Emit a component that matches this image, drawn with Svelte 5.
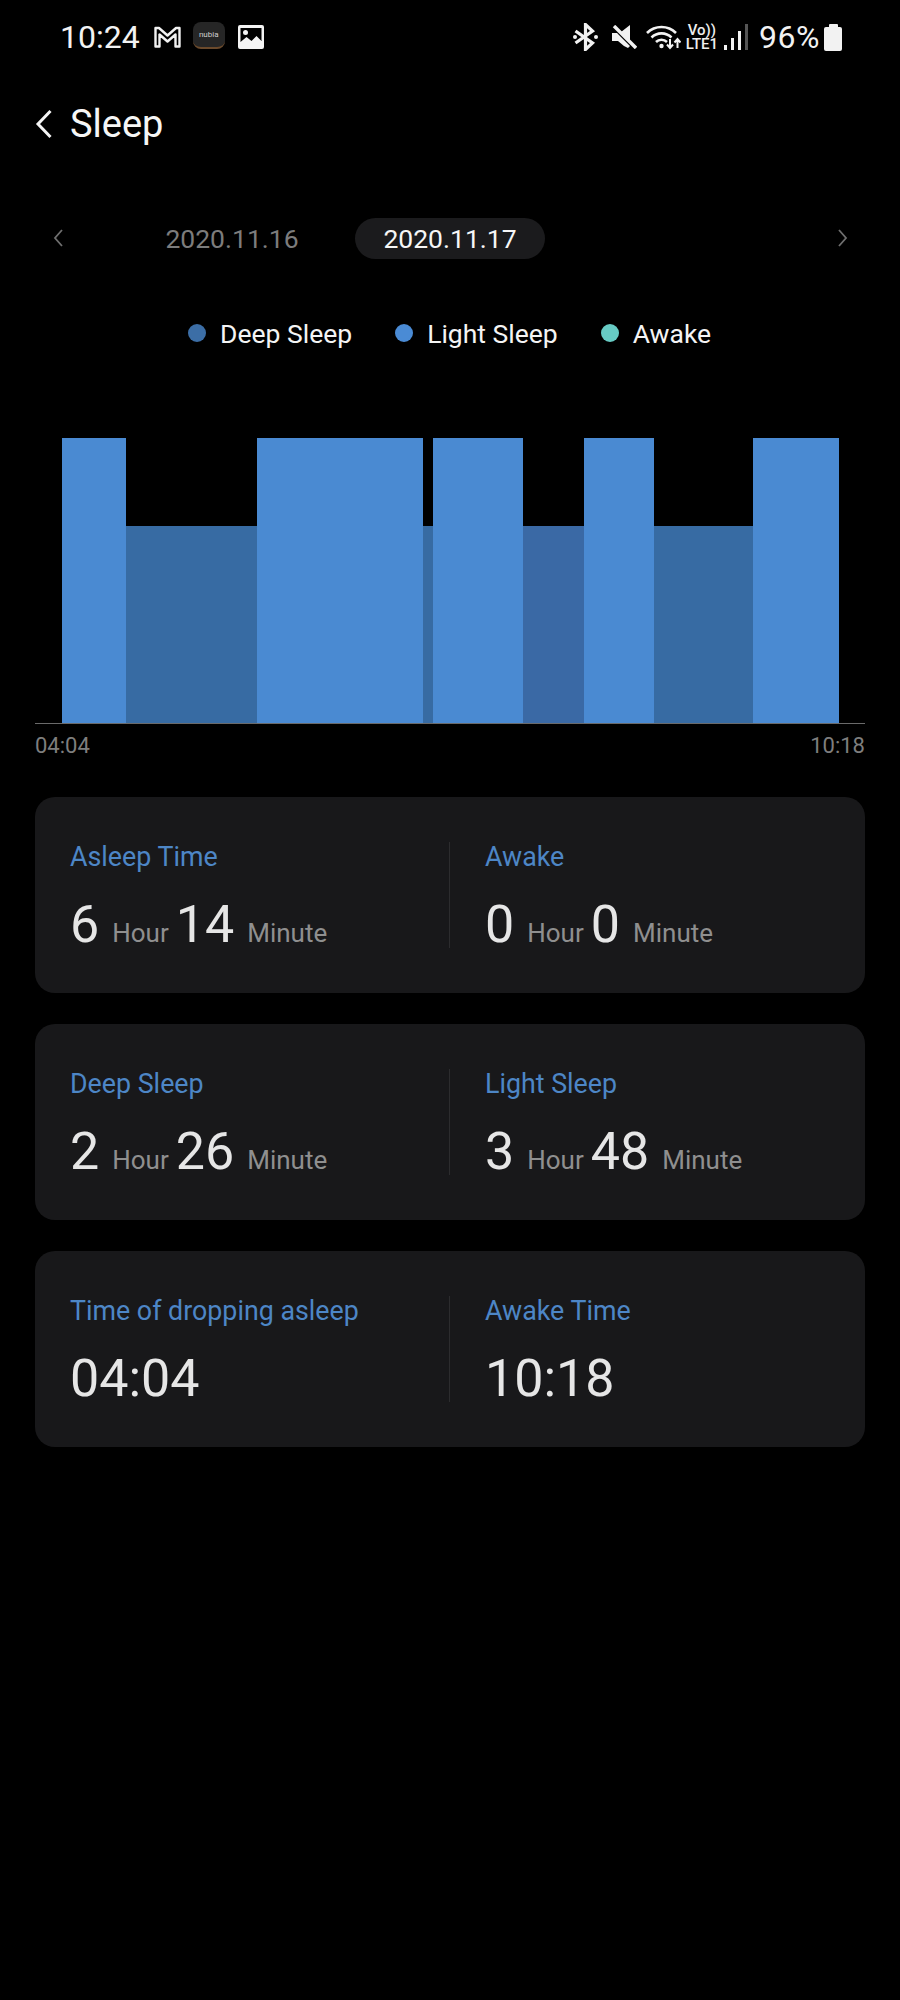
<script>
  // minutes-ish widths measured off the chart, in px
  const segments = [
    { w: 64, kind: 'light' },
    { w: 131, kind: 'deep' },
    { w: 166, kind: 'light' },
    { w: 10, kind: 'deep' },
    { w: 90, kind: 'light' },
    { w: 61, kind: 'deep2' },
    { w: 70, kind: 'light' },
    { w: 99, kind: 'deep' },
    { w: 86, kind: 'light' }
  ];

  const cards = [
    [
      { label: 'Asleep Time', hour: 6, minute: 14 },
      { label: 'Awake', hour: 0, minute: 0 }
    ],
    [
      { label: 'Deep Sleep', hour: 2, minute: 26 },
      { label: 'Light Sleep', hour: 3, minute: 48 }
    ],
    [
      { label: 'Time of dropping asleep', time: '04:04' },
      { label: 'Awake Time', time: '10:18' }
    ]
  ];
</script>

<div class="page">
  <div class="status">
    <div class="status-left">
      <span class="clock">10:24</span>
      <svg class="ic-m" viewBox="0 0 27 22" width="27" height="22">
        <path d="M1.500 20.500V2h3.500L13.500 9.500 22 2h3.500v18.500h-4V8.500L13.500 15.500 5.500 8.500v12Z" fill="none" stroke="#f2f2f2" stroke-width="2.400" stroke-linejoin="round"/>
      </svg>
      <span class="nubia"><span class="nubia-text">nubia</span></span>
      <svg class="ic-pic" viewBox="0 0 26 24" width="26" height="24">
        <path fill-rule="evenodd" fill="#f4f4f4" d="M2 0h22a2 2 0 0 1 2 2v20a2 2 0 0 1-2 2H2a2 2 0 0 1-2-2V2a2 2 0 0 1 2-2ZM2.500 3v14l6-5 5 4 5-5 5 5V3Z"/>
        <circle cx="7.500" cy="7.500" r="2.500" fill="#f4f4f4"/>
      </svg>
    </div>
    <div class="status-right">
      <svg viewBox="0 0 25 28" width="25" height="28">
        <path d="M2.500 8l17 12-7 6.500V1.500l7 6.500L2.500 20" fill="none" stroke="#f2f2f2" stroke-width="3.200"/>
        <circle cx="2" cy="14" r="2" fill="#f2f2f2"/>
        <circle cx="23" cy="14" r="2" fill="#f2f2f2"/>
      </svg>
      <svg class="ic-mute" viewBox="0 0 25 24" width="25" height="24">
        <path d="M9 7l9-7v17ZM0 8h5l13 13-2 2-4-2-6-5H0Z" fill="#f2f2f2"/>
        <path d="M2 1l22 22" stroke="#f2f2f2" stroke-width="3.400"/>
      </svg>
      <svg class="ic-wifi" viewBox="0 0 35 26" width="35" height="26">
        <g fill="none" stroke="#f2f2f2" stroke-width="2.600">
          <path d="M1 9C9 1 22 1 30 9"/>
          <path d="M5.500 13.500C11 8 20 8 25.500 13.500"/>
          <path d="M10 18c3-3 8-3 11 0"/>
        </g>
        <circle cx="15.500" cy="22" r="2.200" fill="#f2f2f2"/>
        <path d="M24 15v9M21 20.500l3 3.500 3-3.500M31.500 24v-9M28.500 18.500l3-3.500 3 3.500" fill="none" stroke="#f2f2f2" stroke-width="2"/>
      </svg>
      <span class="volte"><span>Vo))</span><span>LTE1</span></span>
      <div class="signal">
        <i style="height: 5px"></i>
        <i style="height: 12px"></i>
        <i style="height: 19px"></i>
        <i class="off" style="height: 26px"></i>
      </div>
      <span class="pct">96%</span>
      <div class="battery"><i></i><b></b></div>
    </div>
  </div>

  <div class="title-row">
    <svg viewBox="0 0 18 30" width="18" height="30">
      <path d="M15.500 2L3 15l12.500 13" fill="none" stroke="#f4f4f4" stroke-width="3"/>
    </svg>
    <h1>Sleep</h1>
  </div>

  <div class="dates">
    <svg class="arrow" viewBox="0 0 12 20" width="12" height="20">
      <path d="M10 2L3 10l7 8" fill="none" stroke="#6f6f6f" stroke-width="1.800"/>
    </svg>
    <span class="date prev">2020.11.16</span>
    <span class="date current">2020.11.17</span>
    <svg class="arrow next" viewBox="0 0 12 20" width="12" height="20">
      <path d="M2 2l7 8-7 8" fill="none" stroke="#6f6f6f" stroke-width="1.800"/>
    </svg>
  </div>

  <div class="legend">
    <span class="key"><i class="dot deep"></i>Deep Sleep</span>
    <span class="key"><i class="dot light"></i>Light Sleep</span>
    <span class="key"><i class="dot awake"></i>Awake</span>
  </div>

  <div class="chart">
    <div class="bars">
      {#each segments as seg}
        <div class="seg {seg.kind}" style="width: {seg.w}px"></div>
      {/each}
    </div>
    <div class="axis">
      <span>04:04</span>
      <span>10:18</span>
    </div>
  </div>

  <div class="cards">
    {#each cards as card}
      <div class="card">
        {#each card as item}
          <div class="col">
            <div class="label">{item.label}</div>
            <div class="value">
              {#if item.time}
                <span class="num">{item.time}</span>
              {:else}
                <span class="num">{item.hour}</span>
                <span class="unit hour">Hour</span>
                <span class="num">{item.minute}</span>
                <span class="unit minute">Minute</span>
              {/if}
            </div>
          </div>
        {/each}
      </div>
    {/each}
  </div>
</div>

<style>
  :global(body) {
    background: #000;
  }

  .page {
    height: 2000px;
    background: #000;
    color: #fff;
    font-family: Roboto, "Liberation Sans", sans-serif;
    overflow: hidden;
  }

  .status {
    display: flex;
    justify-content: space-between;
    align-items: center;
    height: 74px;
    padding: 0 58px 0 60px;
  }

  .status-left,
  .status-right {
    display: flex;
    align-items: center;
  }

  .clock,
  .pct {
    font-size: 32px;
    color: #f2f2f2;
  }

  .ic-m {
    margin-left: 14px;
  }

  .nubia {
    display: flex;
    align-items: center;
    justify-content: center;
    width: 32px;
    height: 27px;
    margin-left: 12px;
    margin-top: -4px;
    border-radius: 8px;
    background: #262626;
    border-bottom: 2px solid #6b4a2c;
    box-sizing: border-box;
  }

  .nubia-text {
    font-size: 8px;
    color: #cfcfcf;
  }

  .ic-pic {
    margin-left: 13px;
  }

  .ic-mute {
    margin-left: 14px;
  }

  .ic-wifi {
    margin-left: 9px;
  }

  .volte {
    display: flex;
    flex-direction: column;
    align-items: center;
    margin-left: 5px;
    font-size: 15px;
    line-height: 14px;
    font-weight: 500;
    color: #eee;
  }

  .signal {
    display: flex;
    align-items: flex-end;
    gap: 4px;
    margin-left: 6px;
    height: 26px;
  }

  .signal i {
    width: 3px;
    background: #f2f2f2;
  }

  .signal i.off {
    background: #555;
  }

  .pct {
    margin-left: 11px;
    letter-spacing: 0.5px;
  }

  .battery {
    display: flex;
    flex-direction: column;
    align-items: center;
    margin-left: 4px;
  }

  .battery i {
    width: 9px;
    height: 3px;
    background: #f2f2f2;
    border-radius: 1px 1px 0 0;
  }

  .battery b {
    width: 18px;
    height: 24px;
    background: #f2f2f2;
    border-radius: 2px;
  }

  .title-row {
    display: flex;
    align-items: center;
    height: 100px;
    padding-left: 35px;
    gap: 17px;
  }

  h1 {
    margin: 0;
    font-size: 38px;
    font-weight: 400;
    color: #f6f6f6;
  }

  .dates {
    display: flex;
    align-items: center;
    height: 42px;
    margin-top: 43px;
    padding: 0 51px 0 52px;
  }

  .date {
    font-size: 26.500px;
    text-align: center;
  }

  .prev {
    width: 134px;
    margin-left: 101px;
    color: #7c7c7c;
  }

  .current {
    width: 190px;
    height: 41px;
    line-height: 41px;
    margin-left: 56px;
    border-radius: 21px;
    background: #1b1b1d;
    color: #f6f6f6;
  }

  .next {
    margin-left: auto;
  }

  .legend {
    display: flex;
    align-items: center;
    height: 40px;
    margin-top: 54px;
    padding-left: 188px;
    font-size: 26.500px;
    color: #f4f4f4;
  }

  .key {
    display: flex;
    align-items: center;
    gap: 14px;
    margin-right: 43px;
  }

  .dot {
    width: 18px;
    height: 18px;
    border-radius: 50%;
  }

  .dot.deep {
    background: #3c6ea6;
  }

  .dot.light {
    background: #4a8bd5;
  }

  .dot.awake {
    background: #67cbc4;
  }

  .chart {
    margin: 85px 35px 0;
  }

  .bars {
    display: flex;
    align-items: flex-end;
    height: 285px;
    padding-left: 27px;
    border-bottom: 1px solid #6a6a6a;
  }

  .seg {
    flex: none;
  }

  .seg.light {
    height: 285px;
    background: #4a8ad2;
  }

  .seg.deep {
    height: 197px;
    background: #376ba3;
  }

  .seg.deep2 {
    height: 197px;
    background: #3a69a5;
  }

  .axis {
    display: flex;
    justify-content: space-between;
    margin-top: 9px;
    font-size: 22px;
    line-height: 26px;
    color: #7e7e7e;
  }

  .cards {
    display: flex;
    flex-direction: column;
    gap: 31px;
    margin: 38px 35px 0;
  }

  .card {
    display: grid;
    grid-template-columns: 414px 1fr;
    align-items: center;
    height: 196px;
    border-radius: 20px;
    background: #18181a;
  }

  .col {
    height: 106px;
    padding-left: 35px;
  }

  .col + .col {
    padding-left: 35px;
    border-left: 1px solid #2c2c2e;
  }

  .label {
    font-size: 26.800px;
    line-height: 30px;
    color: #4d86c6;
  }

  .value {
    display: flex;
    align-items: baseline;
    height: 76px;
    padding-top: 16px;
    color: #e6e6e6;
  }

  .num {
    font-size: 52px;
    line-height: 74px;
  }

  .unit {
    font-size: 26px;
    color: #8f8f8f;
  }

  .hour {
    margin: 0 7px 0 13px;
  }

  .minute {
    margin-left: 13px;
  }
</style>
